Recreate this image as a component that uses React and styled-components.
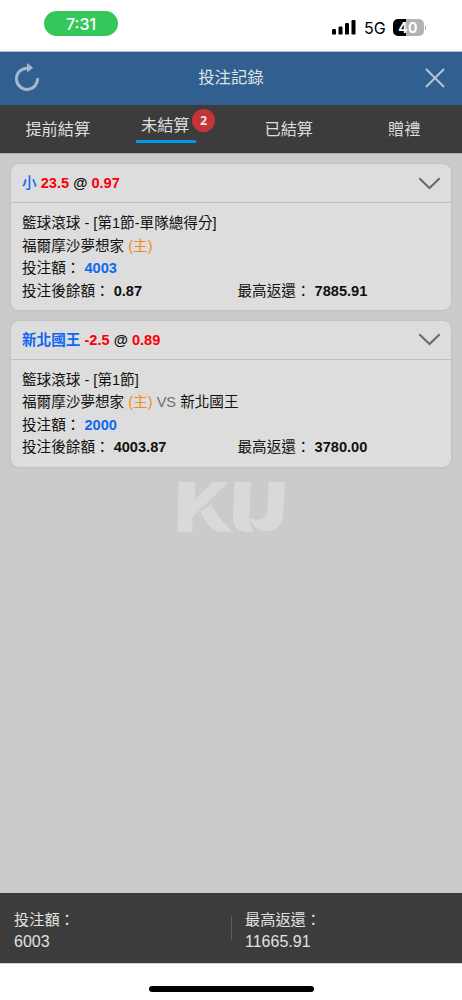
import React from 'react';
import styled, { createGlobalStyle } from 'styled-components';

const GlobalStyle = createGlobalStyle`
  * { box-sizing: border-box; }
  body {
    margin: 0;
    background: #fff;
    font-family: "Liberation Sans", "Noto Sans CJK TC", sans-serif;
    -webkit-font-smoothing: antialiased;
  }
`;

const Screen = styled.div`
  width: 462px;
  height: 1000px;
  display: flex;
  flex-direction: column;
  background: #fff;
  overflow: hidden;
`;

const StatusBar = styled.div`
  height: 51px;
  flex: none;
  display: flex;
  justify-content: space-between;
  align-items: flex-start;
  padding: 11px 36px 0 44px;
`;

const TimePill = styled.div`
  width: 74px;
  height: 25px;
  border-radius: 13px;
  background: #35c759;
  color: #fff;
  font: 500 16px/26px Inter, sans-serif;
  text-align: center;
`;

const StatusIcons = styled.div`
  display: flex;
  align-items: center;
  height: 16px;
  margin-top: 8px;
`;

const Network = styled.span`
  width: 37px;
  padding: 2px 0 0 8.5px;
  font: 400 16px/18px Inter, sans-serif;
  color: #000;
`;

const Battery = styled.div`
  width: 31px;
  height: 17px;
  border-radius: 5px;
  background: linear-gradient(90deg, #000 0 13px, #b3b3b3 13px);
  color: #fff;
  font: 700 14px/17px Inter, sans-serif;
  letter-spacing: 0.2px;
  text-align: center;
`;

const BatteryCap = styled.div`
  width: 1.5px;
  height: 5px;
  margin-left: 1px;
  border-radius: 0 2px 2px 0;
  background: #b3b3b3;
`;

const Header = styled.header`
  height: 54px;
  flex: none;
  display: grid;
  grid-template-columns: 60px 1fr 60px;
  align-items: center;
  padding-bottom: 2px;
  background: #305f90;
  border-top: 1px solid #b5bfca;
`;

const Title = styled.h1`
  margin: 0;
  padding-bottom: 2px;
  text-align: center;
  font-size: 16.4px;
  line-height: 24px;
  font-weight: 400;
  color: #dfe3e8;
`;

const HeaderButton = styled.button`
  display: flex;
  justify-content: ${(p) => (p.$end ? 'flex-end' : 'flex-start')};
  padding: ${(p) => (p.$end ? '0 17px 0 14px' : '0 14px 2px')};
  border: 0;
  background: none;
`;

const Tabs = styled.nav`
  height: 48px;
  flex: none;
  display: grid;
  grid-template-columns: repeat(4, 1fr);
  background: #3c3c3c;
`;

const Tab = styled.div`
  display: flex;
  flex-direction: column;
  align-items: center;
  padding-top: ${(p) => (p.$active ? '8px' : '11.5px')};
  font-size: 16.2px;
  line-height: 24px;
  color: #dedede;
`;

const TabLabel = styled.span`
  position: relative;
  left: ${(p) => p.$shift || 0}px;
  white-space: nowrap;
`;

const Underline = styled.span`
  width: 60px;
  height: 3px;
  margin: 3px 15px 0 0;
  border-radius: 1px;
  background: #009ae8;
`;

const Badge = styled.span`
  position: absolute;
  left: 51px;
  top: -4px;
  width: 23px;
  height: 23px;
  border-radius: 50%;
  background: #c53437;
  color: #e6e6e6;
  font: 700 12.5px/23px "Open Sans", sans-serif;
  text-align: center;
`;

const Content = styled.main`
  flex: 1;
  display: flex;
  flex-direction: column;
  align-items: center;
  gap: 10.6px;
  padding: 10px 11px 0;
  border-top: 1px solid #aaa;
  background: #cbcbcb;
`;

const Card = styled.section`
  width: 440px;
  height: 146px;
  flex: none;
  border-radius: 8px;
  background: #dddddd;
  box-shadow: 0 0 3px rgba(0, 0, 0, 0.1);
  font-size: 14.6px;
  color: #111;
`;

const CardHeader = styled.div`
  height: 39px;
  display: flex;
  justify-content: space-between;
  align-items: center;
  padding: 0 10px 0 11px;
  border-bottom: 1px solid #bfbfbf;
  font-weight: 700;
`;

const Summary = styled.div`
  padding-bottom: 3px;
`;

const CardBody = styled.div`
  padding: 9px 11px 0;
  line-height: 22.6px;
`;

const Row = styled.div`
  height: 22.6px;
  white-space: nowrap;
`;

const Amounts = styled.div`
  display: grid;
  grid-template-columns: 215.5px 1fr;
  white-space: nowrap;
`;

const Pick = styled.span`
  color: #0f68ef;
  font-weight: ${(p) => (p.$medium ? 500 : 700)};
`;

const Odds = styled.span`
  color: #fb0007;
`;

const Home = styled.span`
  color: #f58a1c;
`;

const Versus = styled.span`
  color: #707070;
`;

const Stake = styled.b`
  color: #0f68ef;
`;

const Watermark = styled.svg`
  flex: none;
  margin-top: 4px;
`;

const Footer = styled.footer`
  height: 70px;
  flex: none;
  display: grid;
  grid-template-columns: 231px 1fr;
  align-items: center;
  background: #3c3c3c;
  color: #e2e2e2;
`;

const Total = styled.div`
  height: 24px;
  display: flex;
  flex-direction: column;
  justify-content: center;
  padding-top: 6px;
  padding-left: ${(p) => (p.$divided ? '13px' : '14px')};
  border-left: ${(p) => (p.$divided ? '1px solid #5e5e5e' : '0')};
  font-size: 15.2px;
  line-height: 22px;
  white-space: nowrap;
`;

const TotalValue = styled.span`
  font-size: 16px;
`;

const HomeArea = styled.div`
  height: 37px;
  flex: none;
  display: flex;
  justify-content: center;
  padding-top: 22px;
  border-top: 1px solid #cfcfcf;
`;

const HomeIndicator = styled.div`
  width: 165px;
  height: 6px;
  border-radius: 3px;
  background: #000;
`;

const bets = [
  {
    pick: '小', line: '23.5', odds: '0.97', event: '籃球滾球 - [第1節-單隊總得分]',
    home: '福爾摩沙夢想家', stake: '4003', balance: '0.87', max: '7885.91',
  },
  {
    pick: '新北國王', line: '-2.5', odds: '0.89', event: '籃球滾球 - [第1節]',
    home: '福爾摩沙夢想家', away: '新北國王', stake: '2000', balance: '4003.87', max: '3780.00',
  },
];

function Signal() {
  return (
    <svg width="24" height="16" viewBox="0 0 24 16">
      <rect x="0" y="10" width="4" height="5.6" rx="1.2" />
      <rect x="6.5" y="7.5" width="4" height="8.1" rx="1.2" />
      <rect x="13" y="4" width="4" height="11.6" rx="1.2" />
      <rect x="19.5" y="1" width="4" height="14.6" rx="1.2" />
    </svg>
  );
}

function RefreshIcon() {
  return (
    <svg width="26" height="28" viewBox="0 0 26 28" fill="none">
      <path d="M13.2 5.2A10.6 10.6 0 1 0 23.6 15.2" stroke="#a4b7cb" strokeWidth="3" />
      <path d="M13 0L19.2 4.7L13 9.3Z" fill="#a4b7cb" />
    </svg>
  );
}

function CloseIcon() {
  return (
    <svg width="20" height="20" viewBox="0 0 20 20" fill="none">
      <path d="M1 1L19 19M19 1L1 19" stroke="#b5c5d5" strokeWidth="2" />
    </svg>
  );
}

function Chevron() {
  return (
    <svg width="23" height="13" viewBox="0 0 23 13" fill="none">
      <path d="M1.3 1.2L11.5 11L21.7 1.2" stroke="#686868" strokeWidth="2" />
    </svg>
  );
}

function BetCard({ bet }) {
  return (
    <Card>
      <CardHeader>
        <Summary>
          <Pick $medium={bet.pick.length === 1}>{bet.pick}</Pick> <Odds>{bet.line}</Odds> @ <Odds>{bet.odds}</Odds>
        </Summary>
        <Chevron />
      </CardHeader>
      <CardBody>
        <Row>{bet.event}</Row>
        <Row>
          {bet.home} <Home>(主)</Home>
          {bet.away && <> <Versus>VS</Versus> {bet.away}</>}
        </Row>
        <Row>投注額： <Stake>{bet.stake}</Stake></Row>
        <Amounts>
          <span>投注後餘額： <b>{bet.balance}</b></span>
          <span>最高返還： <b>{bet.max}</b></span>
        </Amounts>
      </CardBody>
    </Card>
  );
}

export default function App() {
  return (
    <Screen>
      <GlobalStyle />
      <StatusBar>
        <TimePill>7:31</TimePill>
        <StatusIcons>
          <Signal />
          <Network>5G</Network>
          <Battery>40</Battery>
          <BatteryCap />
        </StatusIcons>
      </StatusBar>
      <Header>
        <HeaderButton aria-label="重新整理"><RefreshIcon /></HeaderButton>
        <Title>投注記錄</Title>
        <HeaderButton $end aria-label="關閉"><CloseIcon /></HeaderButton>
      </Header>
      <Tabs>
        <Tab><TabLabel>提前結算</TabLabel></Tab>
        <Tab $active>
          <TabLabel $shift={-8}>未結算<Badge>2</Badge></TabLabel>
          <Underline />
        </Tab>
        <Tab><TabLabel>已結算</TabLabel></Tab>
        <Tab><TabLabel>贈禮</TabLabel></Tab>
      </Tabs>
      <Content>
        {bets.map((bet) => <BetCard key={bet.pick} bet={bet} />)}
        <Watermark width="108" height="52" viewBox="0 0 108 52">
          <g fill="#d9d9d9">
            <path d="M1.5 1H18V18L35.5 1H51.5L15.5 36V51H0.5Z" />
            <path d="M23.5 30L34 24Q43 39 56 51H43Q31 49 23.5 30Z" />
            <path d="M57.5 1H74L72.5 34C72 42 74 47 78 51H70C59 50 55.5 44 56 34Z" />
            <path d="M91.5 1H108L106.5 31C106 44 99 50 89 50C80 50 75 44 73 37C83 41 90 38 90.5 29Z" />
          </g>
        </Watermark>
      </Content>
      <Footer>
        <Total><span>投注額：</span><TotalValue>6003</TotalValue></Total>
        <Total $divided><span>最高返還：</span><TotalValue>11665.91</TotalValue></Total>
      </Footer>
      <HomeArea><HomeIndicator /></HomeArea>
    </Screen>
  );
}
